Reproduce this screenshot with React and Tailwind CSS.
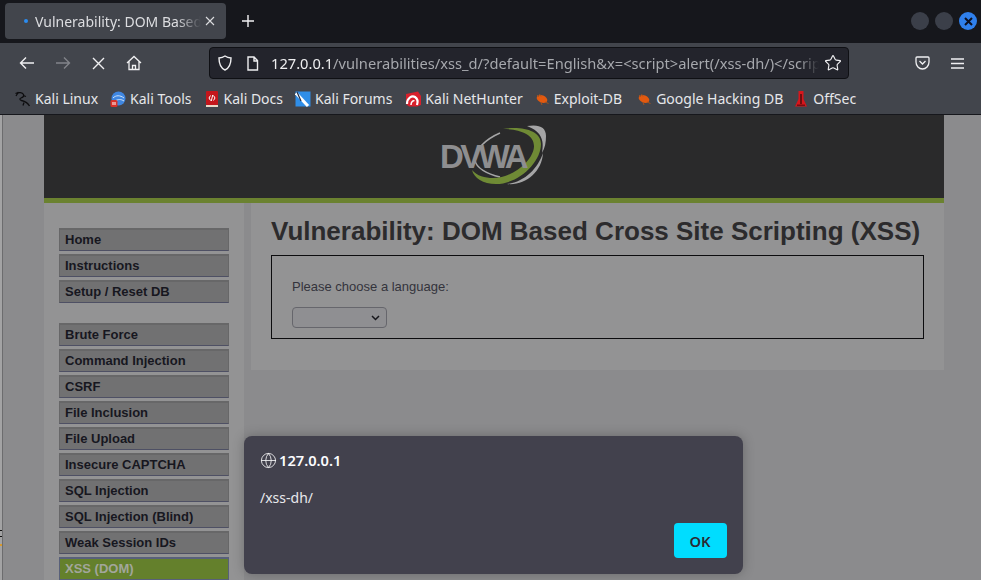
import { Globe, Star } from 'lucide-react'

const uiFont = 'font-["Noto_Sans",sans-serif]'

const navGroups = [
  ['Home', 'Instructions', 'Setup / Reset DB'],
  ['Brute Force', 'Command Injection', 'CSRF', 'File Inclusion', 'File Upload', 'Insecure CAPTCHA', 'SQL Injection', 'SQL Injection (Blind)', 'Weak Session IDs', 'XSS (DOM)'],
]

function Kali() {
  return (
    <svg width="16" height="16" viewBox="0 0 16 16" fill="none" stroke="#0d0d0f" strokeWidth="1.300">
      <path d="M0.500 2.500c3.500-1.500 7-1 8 1s-1 3-2.500 3.500-1.500 2 .5 2.500 6 1.500 8 5.500" />
      <path d="M3.500 1L1 5M8 4.500l3 1M9 11.500l-1 3" />
    </svg>
  )
}

function KaliTools() {
  return (
    <svg width="16" height="16" viewBox="0 0 16 16">
      <circle cx="8.500" cy="7.500" r="7" fill="#3f86e0" />
      <path d="M3 7c3-3 7-3 11 0M5 10c3-2 6-2 9 0" stroke="#cfe3f8" strokeWidth="1" fill="none" />
      <rect x="0.500" y="9" width="7" height="7" rx="1.500" fill="#d8322a" />
      <rect x="2.500" y="11" width="1" height="3" fill="#fff" />
      <rect x="4.500" y="11" width="1" height="3" fill="#fff" />
    </svg>
  )
}

function KaliDocs() {
  return (
    <svg width="16" height="16" viewBox="0 0 16 16">
      <rect x="2" y="0" width="12" height="14" rx="1" fill="#c4161c" />
      <rect x="2" y="14" width="12" height="2" fill="#e9d8c8" />
      <path d="M6.500 4.500L5 7l1.500 2.500M9.500 4.500L11 7 9.500 9.500M8.700 4l-1.400 6" stroke="#fff" strokeWidth="1" fill="none" />
    </svg>
  )
}

function KaliForums() {
  return (
    <svg width="16" height="16" viewBox="0 0 16 16">
      <rect x="0.500" y="0.500" width="15" height="15" fill="#2f8ee8" />
      <path d="M1 2l12 13" stroke="#fff" strokeWidth="3" />
      <path d="M2 1l4 9" stroke="#1d2a44" strokeWidth="1.200" />
    </svg>
  )
}

function NetHunter() {
  return (
    <svg width="16" height="16" viewBox="0 0 16 16">
      <path d="M1 3l12-2.500L16 5v9l-4 1.500H4L1 13z" fill="#d8202c" />
      <path d="M2 13c0-6 5-9 8-7s3 5 2 8" stroke="#fff" strokeWidth="2.200" fill="none" />
      <path d="M6 14c0-3 2-5 3.500-4" stroke="#fff" strokeWidth="1.500" fill="none" />
    </svg>
  )
}

function Bug() {
  return (
    <svg width="16" height="16" viewBox="0 0 16 16">
      <ellipse cx="8" cy="8" rx="5.500" ry="3.600" transform="rotate(20 8 8)" fill="#e2590f" />
      <path d="M3 4l2 2M5.500 3l1.500 2.500M11 11l3.500 1.500M7 11.500l1 2.500" stroke="#a8531c" strokeWidth="0.900" />
    </svg>
  )
}

function OffSec() {
  return (
    <svg width="16" height="16" viewBox="0 0 16 16">
      <path d="M5.500 0h5v8L14 15.500H2L5.500 8z" fill="#d6161c" />
      <rect x="7.200" y="3" width="1.600" height="10" fill="#5a0a0c" />
      <rect x="4" y="13.500" width="8" height="1.500" fill="#7c0c10" />
    </svg>
  )
}

const bookmarks = [
  [Kali, 'Kali Linux', 'mr-[12px]'],
  [KaliTools, 'Kali Tools', 'mr-[12px]'],
  [KaliDocs, 'Kali Docs', 'mr-[12px]'],
  [KaliForums, 'Kali Forums', 'mr-[13px]'],
  [NetHunter, 'Kali NetHunter', 'mr-[11px]'],
  [Bug, 'Exploit-DB', 'mr-[14px]'],
  [Bug, 'Google Hacking DB', 'mr-[10px]'],
  [OffSec, 'OffSec', ''],
]

function Logo() {
  return (
    <div className="relative w-[108px] h-[66px]">
      <svg className="absolute inset-0" width="108" height="66" viewBox="0 0 108 66" fill="none">
        <path d="M59 11C45 17 33 28 34 38c1 8 12 14 25 17" stroke="#a5a5a6" strokeWidth="1.500" />
        <path d="M62 7C80 4 100 8 100 22c0 18-22 40-45 40-13 0-22-6-24-14 5 6 13 8 21 8 20 0 41-18 41-32C93 12 78 7 62 7z" fill="#6f8a35" />
        <path d="M86 4c12-2 19 1 19 10 0 6-1 12-4 17 2-11 1-21-15-27z" fill="#a5a5a6" />
        <path d="M66 62c18-2 31-16 36-31-1 19-18 33-36 31z" fill="#a5a5a6" />
      </svg>
      <span className="absolute left-[-1px] top-[16px] font-['Liberation_Sans',sans-serif] font-bold text-[33px] leading-[38px] tracking-[-3.500px] text-[#8e8e90]">DVWA</span>
    </div>
  )
}

export default function App() {
  return (
    <div className={`relative w-[981px] h-[580px] overflow-hidden bg-[#a3a3a4] ${uiFont}`}>

      {/* browser chrome */}
      <div className="flex items-center h-[43px] bg-[#16171c] pl-[5px] pr-[4px] pb-[1px]">
        <div className="flex items-center w-[221px] h-[36px] rounded bg-[#42454c] pl-[19px] pr-[11px] gap-[3px]">
          <span className="w-[4px] h-[4px] shrink-0 rounded-full bg-[#2b8cf0]" />
          <span className="flex-1 overflow-hidden whitespace-nowrap pl-[4px] text-[14px] text-[#dcdde0] [mask-image:linear-gradient(to_left,transparent,black_24px)]">Vulnerability: DOM Based</span>
          <svg width="10" height="10" viewBox="0 0 10 10" stroke="#dcdde0" strokeWidth="1.100" className="shrink-0 ml-[1px]"><path d="M1 1l8 8M9 1l-8 8" /></svg>
        </div>
        <svg width="12" height="12" viewBox="0 0 12 12" stroke="#f2f2f4" strokeWidth="1.400" className="ml-[16px]"><path d="M6 0v12M0 6h12" /></svg>
        <div className="ml-auto flex items-center gap-[6px]">
          <span className="w-[18px] h-[18px] rounded-full bg-[#3b3f49]" />
          <span className="w-[18px] h-[18px] rounded-full bg-[#3b3f49]" />
          <span className="flex items-center justify-center w-[18px] h-[18px] rounded-full bg-[#2f80ed]">
            <svg width="9" height="9" viewBox="0 0 9 9" stroke="#0d1020" strokeWidth="2"><path d="M1 1l7 7M8 1l-7 7" /></svg>
          </span>
        </div>
      </div>

      <div className="flex items-center h-[37px] bg-[#42454c] pt-[3px] pl-[19px]">
        <svg width="16" height="14" viewBox="0 0 16 14" fill="none" stroke="#f0f0f2" strokeWidth="1.400"><path d="M15 7H1.500M7 1.500L1.500 7 7 12.500" /></svg>
        <svg width="16" height="14" viewBox="0 0 16 14" fill="none" stroke="#82848a" strokeWidth="1.400" className="ml-[20px]"><path d="M1 7h13.500M9 1.500L14.500 7 9 12.500" /></svg>
        <svg width="13" height="13" viewBox="0 0 13 13" stroke="#f0f0f2" strokeWidth="1.400" className="ml-[21px]"><path d="M1 1l11 11M12 1L1 12" /></svg>
        <svg width="16" height="16" viewBox="0 0 16 16" fill="none" stroke="#f0f0f2" strokeWidth="1.300" className="ml-[21px]"><path d="M1 8l7-6.500L15 8M3 6.500V14.500h10V6.500M6.500 14.500v-4h3v4" /></svg>

        <div className="flex items-center w-[640px] h-[32px] ml-[67px] rounded border border-[#0f1014] bg-[#23242c] pl-[7px] pr-[6px]">
          <svg width="16" height="16" viewBox="0 0 16 16" fill="none" stroke="#eeeef0" strokeWidth="1.400"><path d="M8 1c2 1.300 4 1.800 6 2 0 6-1.500 10-6 12C3.500 13 2 9 2 3c2-.2 4-.7 6-2z" /></svg>
          <svg width="13" height="15" viewBox="0 0 13 15" fill="none" stroke="#eeeef0" strokeWidth="1.400" className="ml-[13px]"><path d="M2 1h6l3.500 3.500V14H2zM8 1v4h3.500" /></svg>
          <span className="flex-1 overflow-hidden whitespace-nowrap ml-[12px] text-[14.670px] text-[#a6a8ad] [mask-image:linear-gradient(to_left,transparent,black_20px)]">
            <span className="text-[#eeeef0]">127.0.0.1</span>/vulnerabilities/xss_d/?default=English&amp;x=&lt;script&gt;alert(/xss-dh/)&lt;/script&gt;
          </span>
          <Star size={18} strokeWidth={1.500} className="ml-[5px] text-[#f0f0f2]" />
        </div>

        <svg width="15" height="14" viewBox="0 0 15 14" fill="none" stroke="#f0f0f2" strokeWidth="1.300" className="ml-[66px]"><path d="M2 1h11c.6 0 1 .4 1 1v4c0 4-3 7-6.500 7S1 10 1 6V2c0-.6.4-1 1-1z" /><path d="M4.500 5l3 3 3-3" /></svg>
        <svg width="13" height="11" viewBox="0 0 13 11" stroke="#f0f0f2" strokeWidth="1.300" className="ml-[21px]"><path d="M0 1h13M0 5.500h13M0 10h13" /></svg>
      </div>

      <div className="flex items-center h-[35px] bg-[#42454c] border-b border-[#16171c] pl-[15px] pt-[3px]">
        {bookmarks.map(([Icon, label, gap]) => (
          <div key={label} className={`flex items-center gap-[4px] ${gap}`}>
            <Icon />
            <span className="text-[14px] text-[#e6e7ea] whitespace-nowrap">{label}</span>
          </div>
        ))}
      </div>

      {/* dimmed page */}
      <div className="ml-[2px] h-[465px] border-l border-[#6c6c6e] bg-[#8b8b8d] pl-[41px] font-['Liberation_Sans',sans-serif]">
        <div className="w-[900px]">
          <div className="flex justify-center h-[83px] bg-[#2a2a2b] pt-[7px] pl-[2px]">
            <Logo />
          </div>
          <div className="h-[5px] bg-[#6b8230]" />
          <div className="flex">
            <div className="w-[200px] h-[377px] bg-[#939394] pt-[25px] pl-[15px]">
              {navGroups.map(group => (
                <div key={group[0]} className="mb-[20px]">
                  {group.map(item => {
                    const active = item === 'XSS (DOM)'
                    return (
                      <div
                        key={item}
                        className={`flex items-center w-[170px] h-[23px] mb-[3px] pl-[5px] border-t-2 border-b border-x text-[13px] font-bold ${active ? 'bg-[#64802c] text-[#a2a69b] border-[#58607a]' : 'bg-[#717172] text-[#17171f] border-t-[#676768] border-x-[#676768] border-b-[#4e5064]'}`}
                      >
                        {item}
                      </div>
                    )
                  })}
                </div>
              ))}
            </div>
            <div className="flex-1 pl-[7px] bg-[#8b8b8d]">
              <div className="h-[167px] bg-[#939394] pl-[20px] pr-[20px] pt-[13px]">
                <h1 className="text-[26px] leading-[30px] font-bold text-[#2c2b2d] whitespace-nowrap">Vulnerability: DOM Based Cross Site Scripting (XSS)</h1>
                <div className="h-[84px] mt-[9px] border border-[#0c0c0e] pl-[20px] pt-[23px]">
                  <p className="text-[13px] leading-[16px] text-[#34343c]">Please choose a language:</p>
                  <div className="flex items-center justify-end w-[95px] h-[21px] mt-[12px] rounded-[4px] border border-[#66666c] bg-[#8f8f92] pr-[6px]">
                    <svg width="9" height="6" viewBox="0 0 9 6" fill="none" stroke="#17171c" strokeWidth="1.500"><path d="M1 1l3.500 3.500L8 1" /></svg>
                  </div>
                </div>
              </div>
            </div>
          </div>
        </div>
      </div>

      {/* bits of the desktop showing past the window edge */}
      <span className="absolute left-0 top-[530px] w-[2px] h-px bg-[#111]" />
      <span className="absolute left-0 top-[536px] w-[2px] h-px bg-[#111]" />
      <span className="absolute left-0 top-[544px] w-[2px] h-[2px] bg-[#d99a2b]" />

      {/* alert dialog */}
      <div className="absolute left-[244px] top-[436px] flex flex-col w-[499px] h-[138px] rounded-lg bg-[#42414d] pl-[16px] pr-[16px] shadow-[0_0_12px_rgba(0,0,0,0.25)] font-['Noto_Sans',sans-serif]">
        <div className="flex items-center gap-[2px] h-[16px] mt-[16px]">
          <Globe size={17} strokeWidth={1.200} className="text-[#f4f4f6]" />
          <span className="text-[14.670px] leading-[16px] font-semibold text-[#fbfbfe]">127.0.0.1</span>
        </div>
        <p className="mt-[21px] text-[14px] leading-[18px] text-[#e8e8ec]">/xss-dh/</p>
        <button className="self-end flex items-center justify-center w-[53px] h-[35px] mt-[16px] pr-[1px] rounded bg-[#00ddff] text-[14.670px] font-semibold text-[#2b2a33]">OK</button>
      </div>
    </div>
  )
}
